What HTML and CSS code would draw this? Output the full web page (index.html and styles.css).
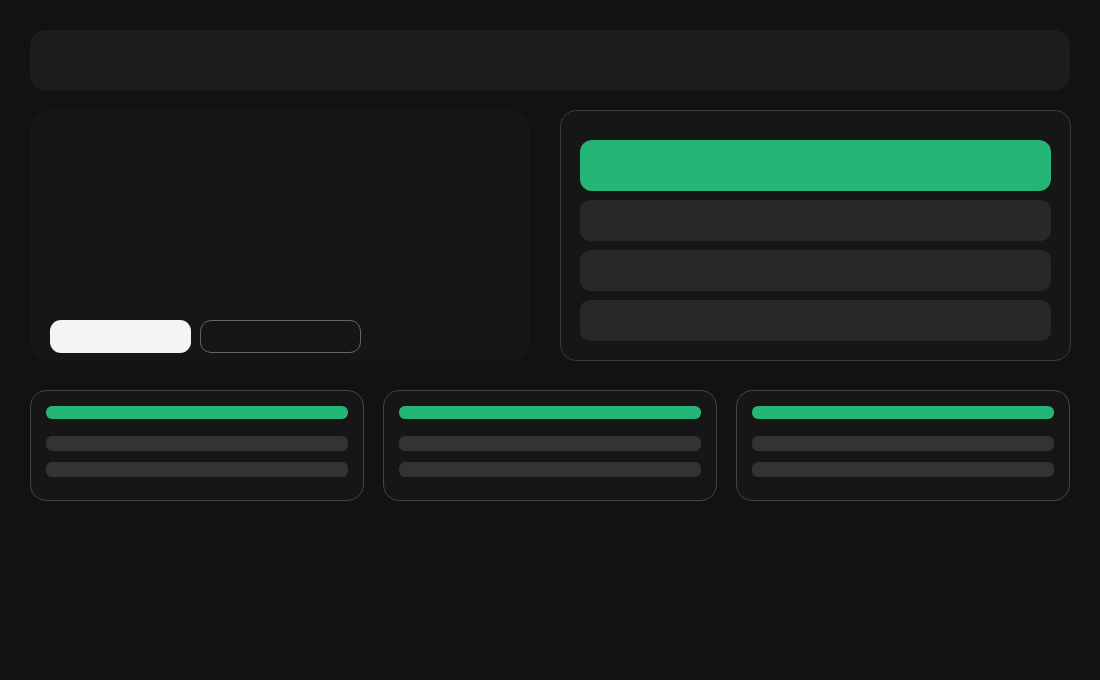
FILE: index.html
```html
<!DOCTYPE html>
<html>
<head>
<meta charset="utf-8">
<link rel="stylesheet" href="styles.css">
</head>
<body>
<div class="page">
  <div class="topbar"></div>
  <div class="main">
    <div class="hero">
      <div class="actions">
        <div class="btn btn-primary"></div>
        <div class="btn btn-outline"></div>
      </div>
    </div>
    <div class="side">
      <div class="row row-active"></div>
      <div class="row"></div>
      <div class="row"></div>
      <div class="row"></div>
    </div>
  </div>
  <div class="cards">
    <div class="card"><div class="bar bar-green"></div><div class="bar"></div><div class="bar"></div></div>
    <div class="card"><div class="bar bar-green"></div><div class="bar"></div><div class="bar"></div></div>
    <div class="card"><div class="bar bar-green"></div><div class="bar"></div><div class="bar"></div></div>
  </div>
</div>
</body>
</html>
```
FILE: styles.css
```css
html, body { margin: 0; padding: 0; background: #121212; }
body { font-family: "Liberation Sans", sans-serif; width: 1100px; height: 680px; }
.page { padding: 30px; display: flex; flex-direction: column; gap: 20px; }
.topbar { height: 61px; background: #1c1c1c; border-radius: 16px; margin-bottom: -1px; }
.main { display: grid; grid-template-columns: 500px 511px; gap: 30px; height: 251px; align-items: start; }
.hero { height: 250px; box-sizing: border-box; background: #161616; border-radius: 20px; display: flex; flex-direction: column; justify-content: flex-end; padding: 0 20px 7px; }
.actions { display: flex; gap: 9px; }
.btn { height: 33px; border-radius: 11px; box-sizing: border-box; }
.btn-primary { width: 141px; background: #f4f4f4; }
.btn-outline { width: 161px; border: 1px solid #666; background: transparent; }
.side { height: 251px; box-sizing: border-box; background: #161616; border: 1px solid #3a3a3a; border-radius: 16px; padding: 29px 19px 19px; display: flex; flex-direction: column; gap: 10px; }
.row { height: 41px; flex: none; background: #282828; border-radius: 10px; }
.row-active { height: 51px; background: #24b676; border-radius: 12px; }
.row + .row { margin-top: -1px; }
.cards { display: grid; grid-template-columns: 334px 334px 334px; gap: 19px; margin-top: 9px; }
.card { height: 111px; box-sizing: border-box; background: #161616; border: 1px solid #444; border-radius: 16px; padding: 15px 15px 0; display: flex; flex-direction: column; gap: 11px; }
.bar { height: 15px; flex: none; background: #333; border-radius: 6px; }
.bar-green { height: 13px; background: #24b676; margin-bottom: 6px; }
```
